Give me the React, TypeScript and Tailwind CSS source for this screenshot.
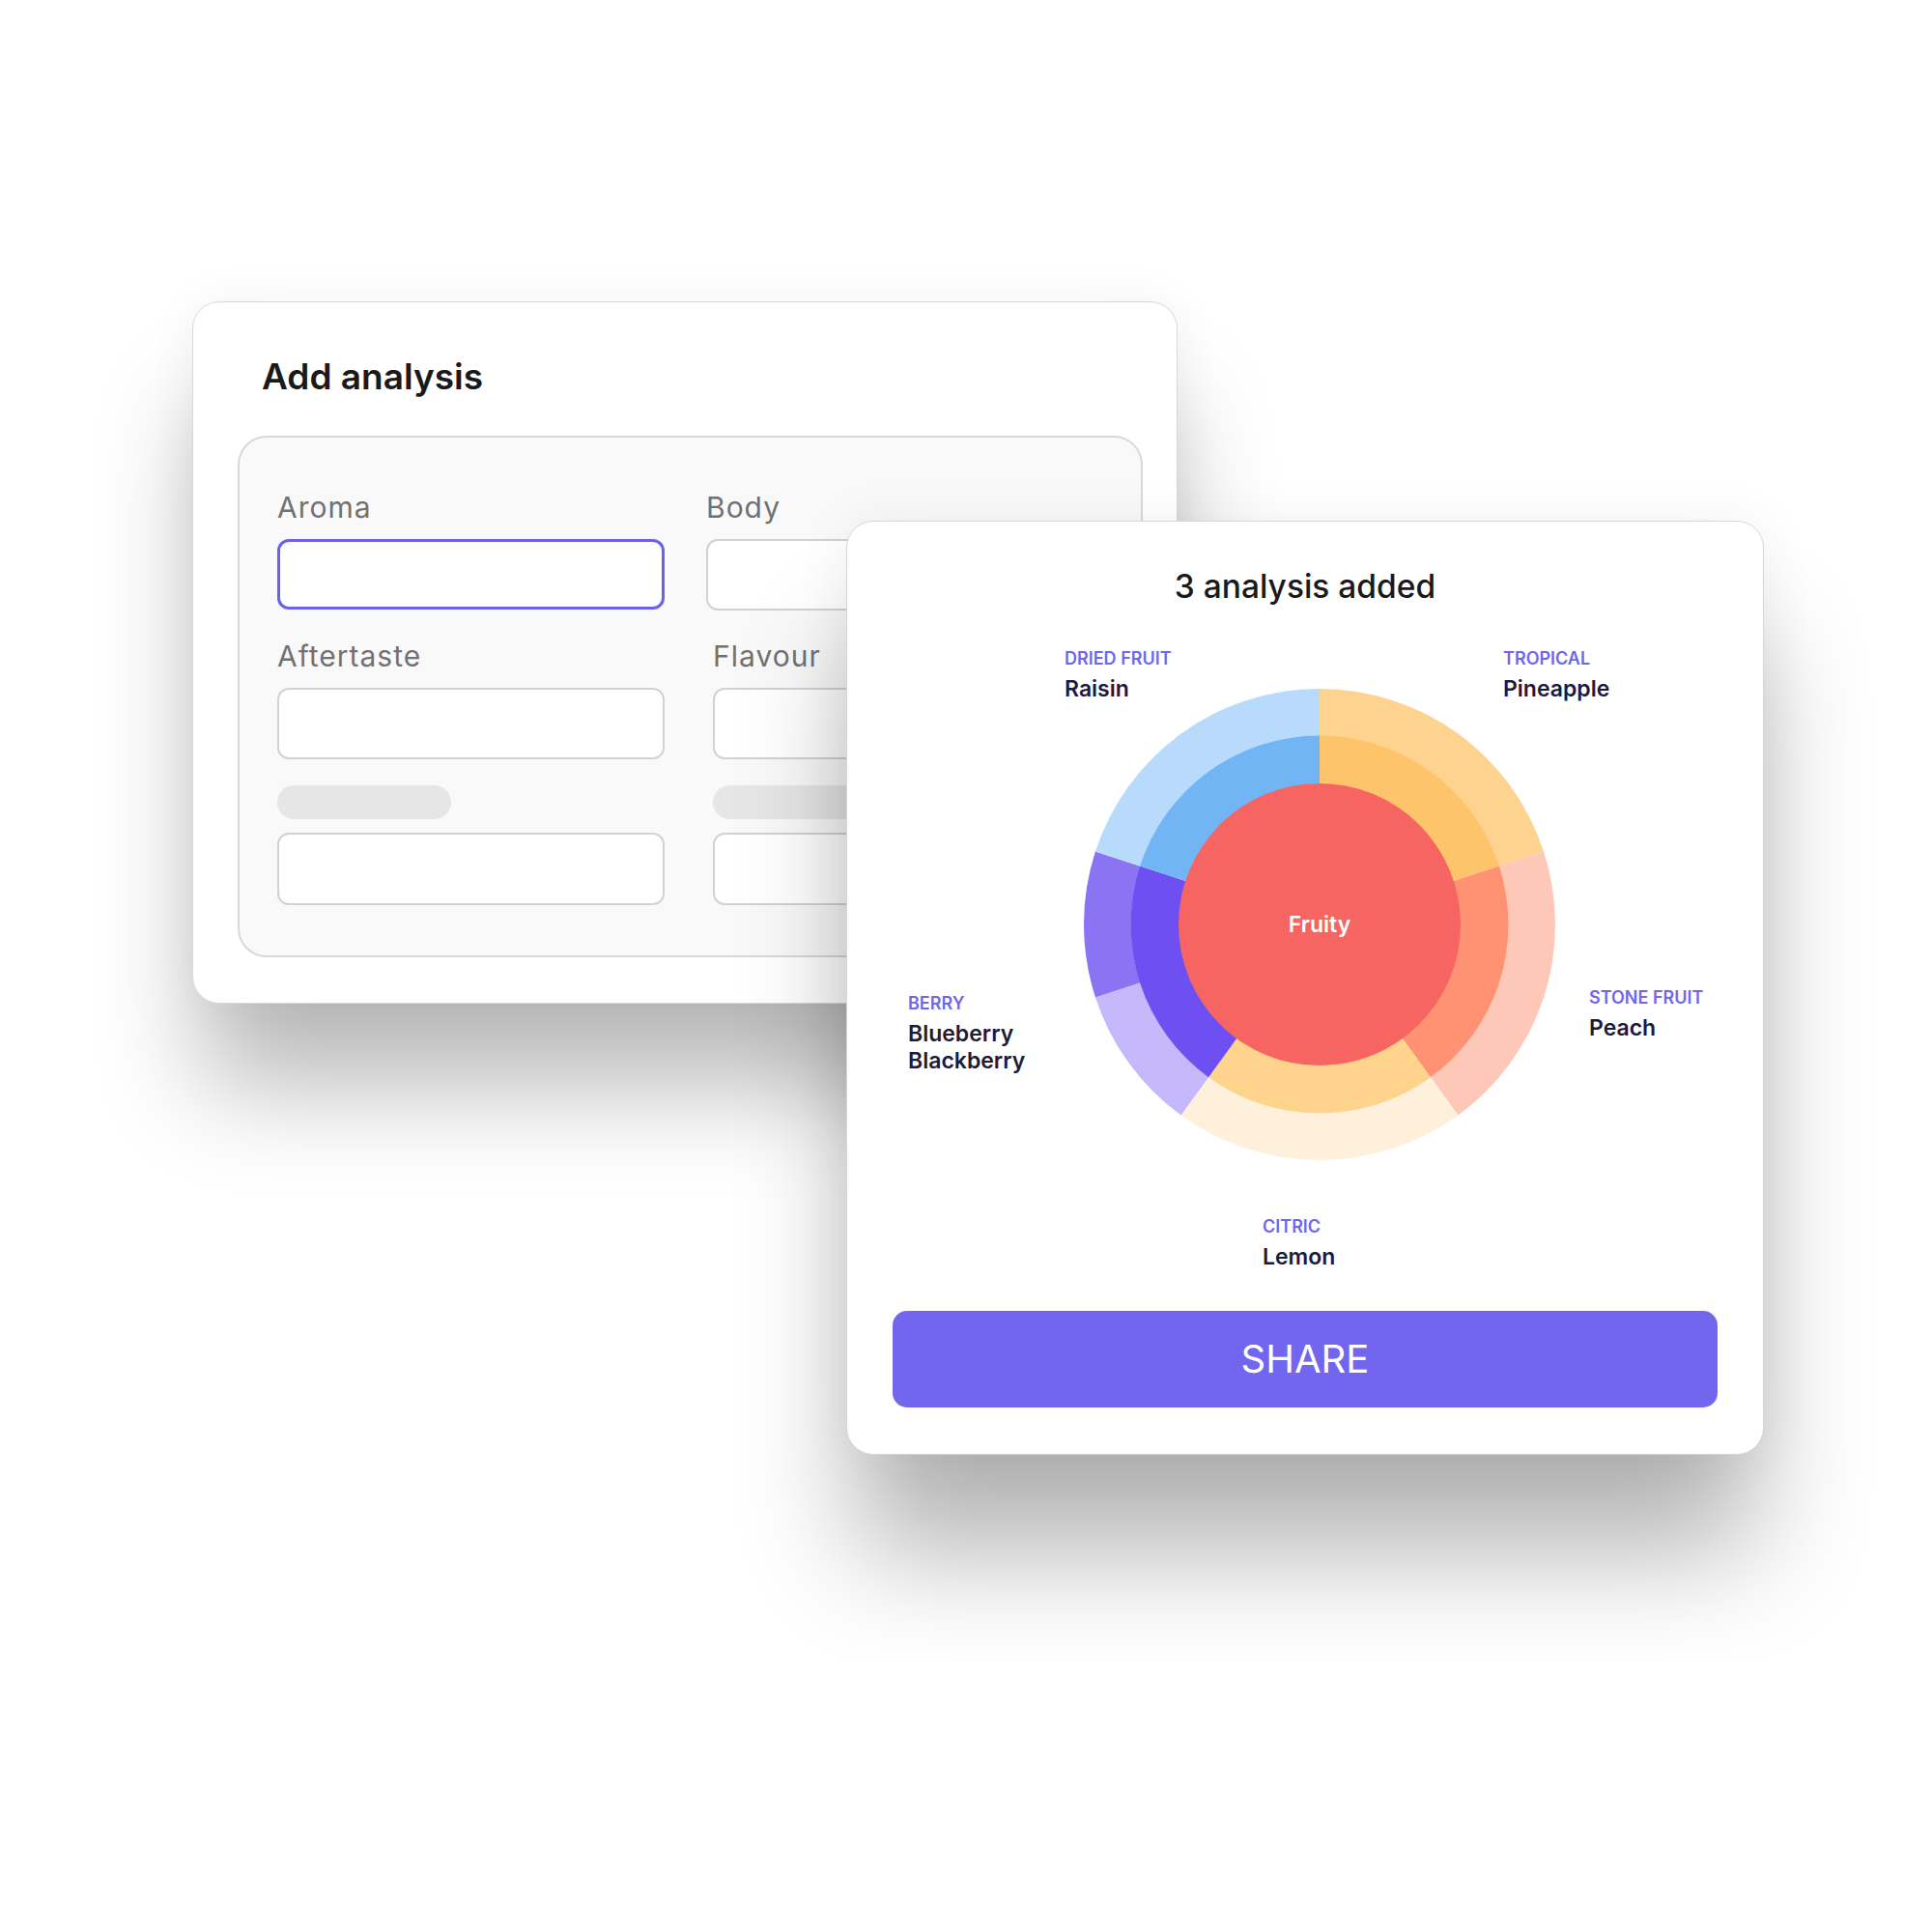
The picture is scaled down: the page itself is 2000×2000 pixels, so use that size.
import React from "react";

type Segment = { from: number; to: number; r1: number; r2: number; fill: string };

const C = 244;

function point(r: number, deg: number) {
  const a = (deg * Math.PI) / 180;
  return `${(C + r * Math.sin(a)).toFixed(2)} ${(C - r * Math.cos(a)).toFixed(2)}`;
}

function sector({ from, to, r1, r2 }: Segment) {
  return [
    `M ${point(r2, from)}`,
    `A ${r2} ${r2} 0 0 1 ${point(r2, to)}`,
    `L ${point(r1, to)}`,
    `A ${r1} ${r1} 0 0 0 ${point(r1, from)}`,
    "Z",
  ].join(" ");
}

const segments: Segment[] = [
  // tropical
  { from: 0, to: 72, r1: 195, r2: 244, fill: "#fed28f" },
  { from: 0, to: 72, r1: 145, r2: 195.5, fill: "#fec46b" },
  // stone fruit
  { from: 72, to: 144, r1: 195, r2: 244, fill: "#fec8b8" },
  { from: 72, to: 144, r1: 145, r2: 195.5, fill: "#fe9272" },
  // citric
  { from: 144, to: 216, r1: 195, r2: 244, fill: "#fff0db" },
  { from: 144, to: 216, r1: 145, r2: 195.5, fill: "#fed48d" },
  // berry
  { from: 216, to: 252, r1: 195, r2: 244, fill: "#c6b9fb" },
  { from: 252, to: 288, r1: 195, r2: 244, fill: "#8b74f3" },
  { from: 216, to: 288, r1: 145, r2: 195.5, fill: "#6e50f2" },
  // dried fruit
  { from: 288, to: 360, r1: 195, r2: 244, fill: "#b8dafb" },
  { from: 288, to: 360, r1: 145, r2: 195.5, fill: "#71b5f5" },
];

const notes = [
  { cat: "Dried fruit", items: ["Raisin"], pos: "left-[225px] top-[44px]" },
  { cat: "Tropical", items: ["Pineapple"], pos: "left-[679px] top-[44px]" },
  { cat: "Berry", items: ["Blueberry", "Blackberry"], pos: "left-[63px] top-[401px]" },
  { cat: "Stone fruit", items: ["Peach"], pos: "left-[768px] top-[395px]" },
  { cat: "Citric", items: ["Lemon"], pos: "left-[430px] top-[632px]" },
];

function Donut() {
  return (
    <svg width="488" height="488" viewBox="0 0 488 488" className="ml-[245px] mt-[86px] block">
      {segments.map((s, i) => (
        <path key={i} d={sector(s)} fill={s.fill} />
      ))}
      <circle cx={C} cy={C} r="146" fill="#f76562" />
    </svg>
  );
}

function Note({ cat, items, pos }: { cat: string; items: string[]; pos: string }) {
  return (
    <div className={`absolute ${pos}`}>
      <p className="text-[18px] font-semibold uppercase leading-[22px] text-[#6f66ef]">{cat}</p>
      <div className="mt-[6px]">
        {items.map((item) => (
          <p key={item} className="text-[23px] font-semibold leading-[28px] text-[#1d1b3a]">
            {item}
          </p>
        ))}
      </div>
    </div>
  );
}

function Field({ label, active, shift }: { label: string; active?: boolean; shift?: boolean }) {
  return (
    <div className={shift ? "-ml-[7px]" : ""}>
      <p className="text-[30px] leading-[36px] tracking-[1px] text-[#717171]">{label}</p>
      <div
        className={
          active
            ? "mt-[15px] h-[73px] w-[401px] rounded-[12px] border-[3px] border-[#6b60f0] bg-white"
            : "mt-[15px] h-[74px] w-[401px] rounded-[12px] border-2 border-[#d2d2d2] bg-white"
        }
      />
    </div>
  );
}

function Skeleton() {
  return (
    <div className="mt-[27px]">
      <div className="h-[35px] w-[180px] rounded-full bg-[#e6e6e6]" />
      <div className="mt-[14px] h-[75px] w-[401px] rounded-[12px] border-2 border-[#d2d2d2] bg-white" />
    </div>
  );
}

function AddAnalysisCard() {
  return (
    <div className="ml-[199px] w-[1020px] rounded-[28px] border border-[#d9d9d9] bg-white pt-[55px] pb-[47px] shadow-[0_95px_110px_-10px_rgba(0,0,0,0.28),0_0_50px_rgba(0,0,0,0.05)]">
      <h2 className="pl-[71px] text-[37px] font-semibold leading-[44px] text-[#1a1a1a]">Add analysis</h2>
      <div className="mt-[39px] ml-[46px] w-[937px] rounded-[30px] border-2 border-[#d8d8d8] bg-[#f9f9f9] pt-[54px] pb-[52px] pl-[39px]">
        <div className="grid grid-cols-[401px_401px] gap-x-[50px]">
          <Field label="Aroma" active />
          <Field label="Body" shift />
          <div className="mt-[29px]">
            <Field label="Aftertaste" />
          </div>
          <div className="mt-[29px]">
            <Field label="Flavour" />
          </div>
          <Skeleton />
          <Skeleton />
        </div>
      </div>
    </div>
  );
}

function ResultCard() {
  return (
    <div className="absolute left-[876px] top-[539px] flex h-[967px] w-[950px] flex-col rounded-[28px] border border-[#d6d6d6] bg-white pt-[47px] shadow-[0_110px_120px_-10px_rgba(0,0,0,0.3),0_0_60px_rgba(0,0,0,0.06)]">
      <h2 className="text-center text-[33.5px] font-medium leading-[40px] text-[#1a1a1a]">3 analysis added</h2>
      <div className="relative h-[730px]">
        <Donut />
        <p className="absolute left-[489px] top-[330px] -translate-x-1/2 -translate-y-1/2 text-[23px] font-semibold text-white">
          Fruity
        </p>
        {notes.map((n) => (
          <Note key={n.cat} {...n} />
        ))}
      </div>
      <button className="mx-[47px] flex h-[100px] items-center justify-center rounded-[15px] bg-[#7366ee] text-[40px] font-normal text-white">
        SHARE
      </button>
    </div>
  );
}

export default function App() {
  return (
    <div className="h-[2000px] w-[2000px] bg-white font-['Inter',sans-serif]">
      <div className="relative h-[1720px] overflow-hidden pt-[312px]">
        <AddAnalysisCard />
        <ResultCard />
      </div>
    </div>
  );
}
